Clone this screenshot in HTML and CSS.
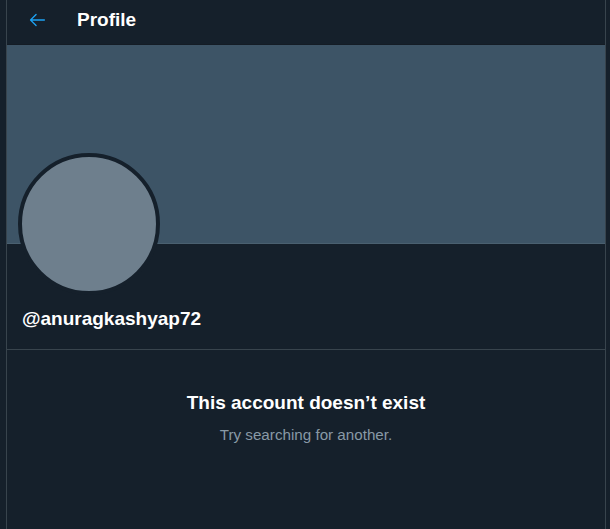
FILE: index.html
```html
<!DOCTYPE html>
<html lang="en">
<head>
  <meta charset="UTF-8">
  <meta name="viewport" content="width=device-width, initial-scale=1.0">
  <title>Profile</title>
  <link rel="stylesheet" href="styles.css">
</head>
<body>
  <div class="column">
    <header class="topbar">
      <button class="back" aria-label="Back">
        <svg viewBox="0 0 24 24" width="22" height="22">
          <path d="M20 11.25H6.8l4.7-4.7a.75.75 0 0 0-1.06-1.06l-6 6a.75.75 0 0 0 0 1.06l6 6a.75.75 0 0 0 1.06-1.06l-4.7-4.7H20a.75.75 0 0 0 0-1.5z"/>
        </svg>
      </button>
      <h1>Profile</h1>
    </header>

    <div class="banner"></div>

    <div class="profile">
      <div class="avatar"></div>
      <div class="handle">@anuragkashyap72</div>
    </div>

    <div class="empty">
      <h2>This account doesn’t exist</h2>
      <p>Try searching for another.</p>
    </div>
  </div>
</body>
</html>
```

FILE: styles.css
```css
body {
  margin: 0;
  background-color: #15202b;
  font-family: "Liberation Sans", Arial, sans-serif;
  color: #fff;
}
.column {
  margin-left: 6px;
  width: 598px;
  min-height: 100vh;
  border-left: 1px solid #38444d;
  border-right: 1px solid #38444d;
}
.topbar {
  display: flex;
  align-items: center;
  height: 40px;
  padding: 0 16px 4px 14px;
  border-bottom: 1px solid #141c25;
}
.back {
  display: flex;
  align-items: center;
  justify-content: center;
  width: 32px;
  height: 32px;
  padding: 0;
  border: none;
  background: none;
  fill: #1da1f2;
}
.topbar h1 {
  margin: 0 0 0 24px;
  font-size: 19px;
  font-weight: 700;
}
.banner {
  height: 198px;
  background-color: #3d5466;
  border-bottom: 1px solid #4a6070;
}
.profile {
  display: flex;
  flex-direction: column;
  padding: 0 11px;
  height: 105px;
  border-bottom: 1px solid #38444d;
}
.avatar {
  width: 134px;
  height: 134px;
  margin-top: -91px;
  border-radius: 50%;
  background-color: #6e7f8d;
  border: 4px solid #15202b;
}
.handle {
  margin: 13px 0 0 4px;
  font-size: 19px;
  font-weight: 700;
}
.empty {
  padding-top: 42px;
  text-align: center;
}
.empty h2 {
  margin: 0;
  font-size: 19px;
  font-weight: 700;
}
.empty p {
  margin: 12px 0 0;
  font-size: 15.2px;
  color: #8899a6;
}
```
